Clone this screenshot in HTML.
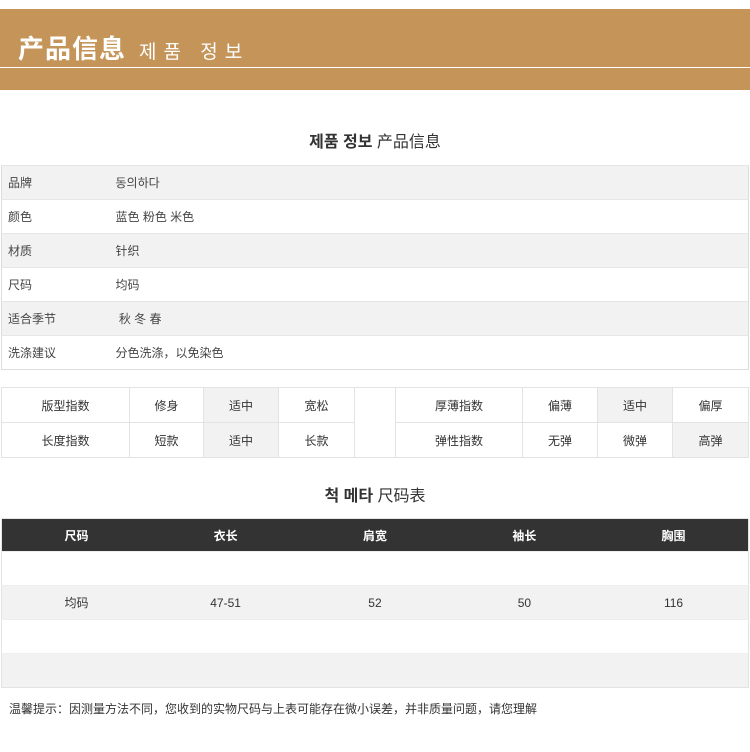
<!DOCTYPE html>
<html><head><meta charset="utf-8"><style>
*{margin:0;padding:0;box-sizing:border-box}
body{width:750px;height:752px;background:#fff;font-family:"Liberation Sans","Noto Sans CJK SC",sans-serif;color:#333;font-size:12px;position:relative;overflow:hidden}
.hd{position:absolute;left:0;top:9px;width:750px;height:81px;background:#c49459}
.hd .ln{position:absolute;left:0;top:58px;width:750px;height:1px;background:#fff}
.hd .t{position:absolute;left:18px;top:20px;color:#fff;font-size:26px;font-weight:bold;letter-spacing:1px;white-space:nowrap}
.hd .t span{font-size:19px;font-weight:normal;letter-spacing:7px;margin-left:13px;font-family:"Liberation Sans","Noto Sans CJK KR",sans-serif}
.h2{position:absolute;left:0;width:750px;text-align:center;font-size:16px;color:#333}
.h2 b{font-family:"Liberation Sans","Noto Sans CJK KR",sans-serif}
table{border-collapse:collapse;position:absolute;left:1px;width:748px;table-layout:fixed}
.info td{height:34px;border-top:1px solid #e6e6e6;padding-left:6px;font-size:12px;color:#444}
.info{top:165px;border:1px solid #ddd}
.info tr:nth-child(odd){background:#f2f2f2}
.idx{top:387px;border:1px solid #e3e3e3}
.idx td{height:35px;border:1px solid #e3e3e3;text-align:center;font-size:12px}
.g{background:#f2f2f2}
.sz{top:518px;border:1px solid #e3e3e3}
.sz th{height:33px;background:#333;color:#fff;font-weight:bold;font-size:12px}
.sz td{height:34px;text-align:center;font-size:12px;border-top:1px solid #eee}
.sz tr:nth-child(odd) td{background:#f2f2f2}
.ft{position:absolute;left:9px;top:700px;font-size:12px;color:#333}
</style></head><body>
<div class="hd"><div class="ln"></div><div class="t">产品信息<span>제품 정보</span></div></div>
<div class="h2" style="top:128px"><b>제품 정보</b> 产品信息</div>
<table class="info">
<col style="width:108px"><col>
<tr><td>品牌</td><td>동의하다</td></tr>
<tr><td>颜色</td><td>蓝色 粉色 米色</td></tr>
<tr><td>材质</td><td>针织</td></tr>
<tr><td>尺码</td><td>均码</td></tr>
<tr><td>适合季节</td><td>&nbsp;秋 冬 春</td></tr>
<tr><td>洗涤建议</td><td>分色洗涤，以免染色</td></tr>
</table>
<table class="idx">
<col style="width:128px"><col style="width:74px"><col style="width:75px"><col style="width:76px"><col style="width:41px"><col style="width:127px"><col style="width:75px"><col style="width:75px"><col>
<tr><td>版型指数</td><td>修身</td><td class="g">适中</td><td>宽松</td><td rowspan="2"></td><td>厚薄指数</td><td>偏薄</td><td class="g">适中</td><td>偏厚</td></tr>
<tr><td>长度指数</td><td>短款</td><td class="g">适中</td><td>长款</td><td>弹性指数</td><td>无弹</td><td>微弹</td><td class="g">高弹</td></tr>
</table>
<div class="h2" style="top:482px"><b>척 메타</b> 尺码表</div>
<table class="sz">
<tr><th>尺码</th><th>衣长</th><th>肩宽</th><th>袖长</th><th>胸围</th></tr>
<tr><td></td><td></td><td></td><td></td><td></td></tr>
<tr><td>均码</td><td>47-51</td><td>52</td><td>50</td><td>116</td></tr>
<tr><td></td><td></td><td></td><td></td><td></td></tr>
<tr><td></td><td></td><td></td><td></td><td></td></tr>
</table>
<div class="ft">温馨提示：因测量方法不同，您收到的实物尺码与上表可能存在微小误差，并非质量问题，请您理解</div>
</body></html>
